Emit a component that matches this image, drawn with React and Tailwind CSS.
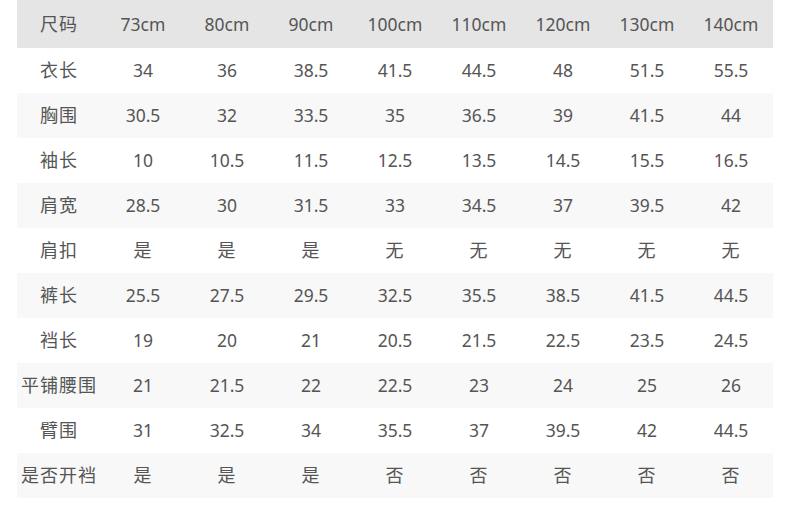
const header = ["尺码", "73cm", "80cm", "90cm", "100cm", "110cm", "120cm", "130cm", "140cm"];

const rows = [
  ["衣长", "34", "36", "38.5", "41.5", "44.5", "48", "51.5", "55.5"],
  ["胸围", "30.5", "32", "33.5", "35", "36.5", "39", "41.5", "44"],
  ["袖长", "10", "10.5", "11.5", "12.5", "13.5", "14.5", "15.5", "16.5"],
  ["肩宽", "28.5", "30", "31.5", "33", "34.5", "37", "39.5", "42"],
  ["肩扣", "是", "是", "是", "无", "无", "无", "无", "无"],
  ["裤长", "25.5", "27.5", "29.5", "32.5", "35.5", "38.5", "41.5", "44.5"],
  ["裆长", "19", "20", "21", "20.5", "21.5", "22.5", "23.5", "24.5"],
  ["平铺腰围", "21", "21.5", "22", "22.5", "23", "24", "25", "26"],
  ["臂围", "31", "32.5", "34", "35.5", "37", "39.5", "42", "44.5"],
  ["是否开裆", "是", "是", "是", "否", "否", "否", "否", "否"],
];

function Cell({ text }) {
  const cjk = /[\u4e00-\u9fff]/.test(text);
  return (
    <div className={"text-center " + (cjk ? "text-[18px] tracking-[1px]" : "text-[17.5px]")}>
      {text}
    </div>
  );
}

export default function App() {
  return (
    <div
      className="w-[790px] h-[509px] bg-white pl-[17px] text-[#555555]"
      style={{ fontFamily: '"Noto Sans", "Noto Sans CJK SC", sans-serif' }}
    >
      <div className="w-[756px]">
        <div className="grid grid-cols-9 h-[48px] bg-[#e5e5e5] items-center">
          {header.map((h, i) => (
            <Cell key={i} text={h} />
          ))}
        </div>
        {rows.map((r, ri) => (
          <div
            key={ri}
            className={
              "grid grid-cols-9 h-[45px] items-center " +
              (ri % 2 === 1 ? "bg-[#f8f8f8]" : "bg-white")
            }
          >
            {r.map((c, ci) => (
              <Cell key={ci} text={c} />
            ))}
          </div>
        ))}
      </div>
    </div>
  );
}
